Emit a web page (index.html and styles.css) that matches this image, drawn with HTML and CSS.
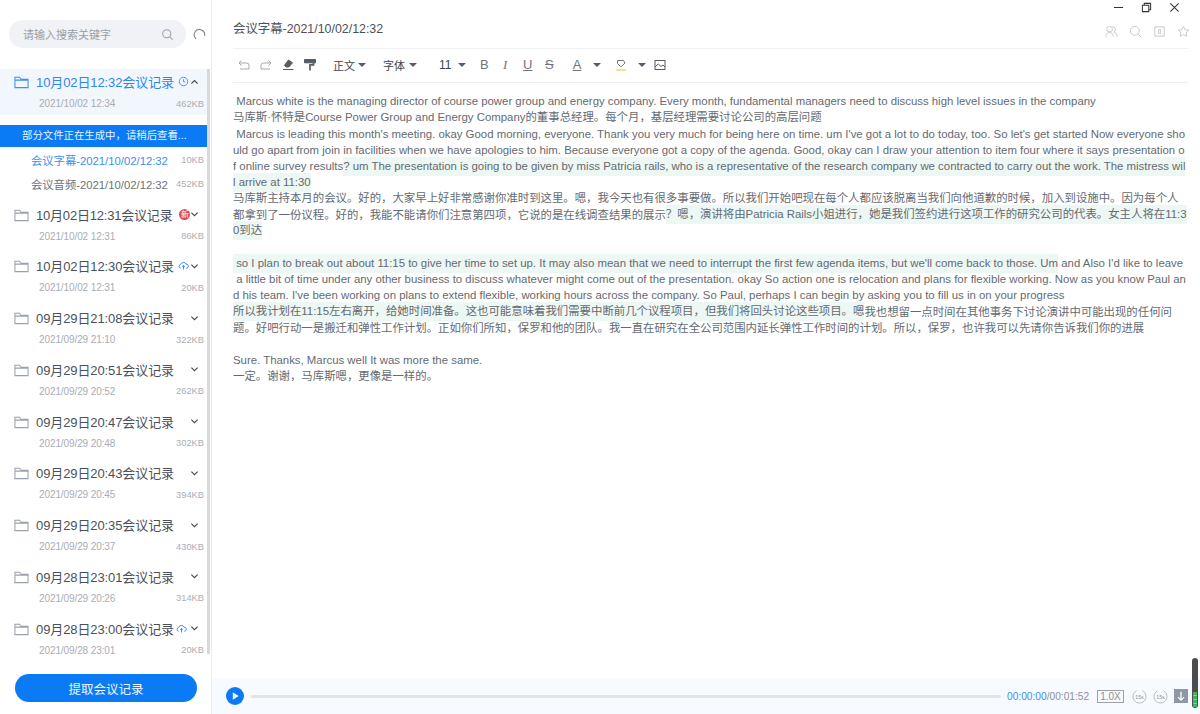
FILE: index.html
```html
<!DOCTYPE html>
<html lang="zh">
<head>
<meta charset="utf-8">
<title>会议记录</title>
<link rel="stylesheet" href="styles.css">
</head>
<body>
<div class="app">
  <aside class="side">
    <div class="search-row">
      <div class="search"><span class="ph">请输入搜索关键字</span>
        <svg class="s-ic" viewBox="0 0 14 14"><circle cx="6.2" cy="6.2" r="4.4"/><path d="M9.5 9.5L12.5 12.5"/></svg></div>
      <svg class="refresh" viewBox="0 0 14 14"><path d="M3.4 11.6A5.6 5.6 0 1 1 12.4 8.6"/></svg>
    </div>
    <div class="list">
      <div class="rec active">
        <div class="r1"><svg class="folder" viewBox="0 0 16 14"><path d="M1 2h5l1.5 2H15v9H1zM1 5h14"/></svg><span class="name">10月02日12:32会议记录</span>
          <svg class="st" viewBox="0 0 12 12"><circle cx="6" cy="6" r="4.6"/><path d="M6 3.5V6.3H8"/></svg>
          <svg class="chev" viewBox="0 0 10 6"><path d="M1.5 4.8L5 1.5L8.5 4.8"/></svg></div>
        <div class="r2"><span>2021/10/02 12:34</span><span>462KB</span></div>
      </div>
      <div class="notice">部分文件正在生成中，请稍后查看...</div>
      <div class="sub blue"><span>会议字幕-2021/10/02/12:32</span><span class="sz">10KB</span></div>
      <div class="sub"><span>会议音频-2021/10/02/12:32</span><span class="sz">452KB</span></div>
      <div class="rec first">
        <div class="r1"><svg class="folder" viewBox="0 0 16 14"><path d="M1 2h5l1.5 2H15v9H1zM1 5h14"/></svg><span class="name n2">10月02日12:31会议记录</span>
          <span class="new">新</span><svg class="chev" viewBox="0 0 10 6"><path d="M1.5 1.5L5 4.8L8.5 1.5"/></svg></div>
        <div class="r2"><span>2021/10/02 12:31</span><span>86KB</span></div>
      </div>
      <div class="rec">
        <div class="r1"><svg class="folder" viewBox="0 0 16 14"><path d="M1 2h5l1.5 2H15v9H1zM1 5h14"/></svg><span class="name">10月02日12:30会议记录</span>
          <svg class="cloud" viewBox="0 0 12 10"><path d="M3 8H2.6A2.1 2.1 0 0 1 2.8 3.9A3.3 3.3 0 0 1 9 3.6A2.2 2.2 0 0 1 9.4 8H9M6 9.5V5M4.5 6.4L6 5L7.5 6.4"/></svg>
          <svg class="chev" viewBox="0 0 10 6"><path d="M1.5 1.5L5 4.8L8.5 1.5"/></svg></div>
        <div class="r2"><span>2021/10/02 12:31</span><span>20KB</span></div>
      </div>
      <div class="rec">
        <div class="r1"><svg class="folder" viewBox="0 0 16 14"><path d="M1 2h5l1.5 2H15v9H1zM1 5h14"/></svg><span class="name">09月29日21:08会议记录</span>
          <svg class="chev" viewBox="0 0 10 6"><path d="M1.5 1.5L5 4.8L8.5 1.5"/></svg></div>
        <div class="r2"><span>2021/09/29 21:10</span><span>322KB</span></div>
      </div>
      <div class="rec">
        <div class="r1"><svg class="folder" viewBox="0 0 16 14"><path d="M1 2h5l1.5 2H15v9H1zM1 5h14"/></svg><span class="name">09月29日20:51会议记录</span>
          <svg class="chev" viewBox="0 0 10 6"><path d="M1.5 1.5L5 4.8L8.5 1.5"/></svg></div>
        <div class="r2"><span>2021/09/29 20:52</span><span>262KB</span></div>
      </div>
      <div class="rec">
        <div class="r1"><svg class="folder" viewBox="0 0 16 14"><path d="M1 2h5l1.5 2H15v9H1zM1 5h14"/></svg><span class="name">09月29日20:47会议记录</span>
          <svg class="chev" viewBox="0 0 10 6"><path d="M1.5 1.5L5 4.8L8.5 1.5"/></svg></div>
        <div class="r2"><span>2021/09/29 20:48</span><span>302KB</span></div>
      </div>
      <div class="rec">
        <div class="r1"><svg class="folder" viewBox="0 0 16 14"><path d="M1 2h5l1.5 2H15v9H1zM1 5h14"/></svg><span class="name">09月29日20:43会议记录</span>
          <svg class="chev" viewBox="0 0 10 6"><path d="M1.5 1.5L5 4.8L8.5 1.5"/></svg></div>
        <div class="r2"><span>2021/09/29 20:45</span><span>394KB</span></div>
      </div>
      <div class="rec">
        <div class="r1"><svg class="folder" viewBox="0 0 16 14"><path d="M1 2h5l1.5 2H15v9H1zM1 5h14"/></svg><span class="name">09月29日20:35会议记录</span>
          <svg class="chev" viewBox="0 0 10 6"><path d="M1.5 1.5L5 4.8L8.5 1.5"/></svg></div>
        <div class="r2"><span>2021/09/29 20:37</span><span>430KB</span></div>
      </div>
      <div class="rec">
        <div class="r1"><svg class="folder" viewBox="0 0 16 14"><path d="M1 2h5l1.5 2H15v9H1zM1 5h14"/></svg><span class="name">09月28日23:01会议记录</span>
          <svg class="chev" viewBox="0 0 10 6"><path d="M1.5 1.5L5 4.8L8.5 1.5"/></svg></div>
        <div class="r2"><span>2021/09/29 20:26</span><span>314KB</span></div>
      </div>
      <div class="rec">
        <div class="r1"><svg class="folder" viewBox="0 0 16 14"><path d="M1 2h5l1.5 2H15v9H1zM1 5h14"/></svg><span class="name tight">09月28日23:00会议记录</span>
          <svg class="cloud" viewBox="0 0 12 10"><path d="M3 8H2.6A2.1 2.1 0 0 1 2.8 3.9A3.3 3.3 0 0 1 9 3.6A2.2 2.2 0 0 1 9.4 8H9M6 9.5V5M4.5 6.4L6 5L7.5 6.4"/></svg>
          <svg class="chev" viewBox="0 0 10 6"><path d="M1.5 1.5L5 4.8L8.5 1.5"/></svg></div>
        <div class="r2"><span>2021/09/28 23:01</span><span>20KB</span></div>
      </div>
    </div>
    <div class="bottom"><button class="fetch">提取会议记录</button></div>
  </aside>
  <main class="main">
    <div class="winbar">
      <svg viewBox="0 0 12 12" class="w"><path d="M1 6H11"/></svg>
      <svg viewBox="0 0 12 12" class="w"><path d="M1.5 3.5H8.5V10.5H1.5zM3.5 3.5V1.5H10.5V8.5H8.5"/></svg>
      <svg viewBox="0 0 12 12" class="w"><path d="M1.5 1.5L10.5 10.5M10.5 1.5L1.5 10.5"/></svg>
    </div>
    <div class="head">
      <h1 class="title">会议字幕-2021/10/02/12:32</h1>
      <div class="tools">
        <svg viewBox="0 0 14 14"><circle cx="5" cy="4.5" r="3"/><path d="M1 12.5C1 9.5 3 8 5 8S9 9.5 9 12.5M8 1.8A3 3 0 0 1 9.5 7.5C11.5 8 13 9.7 13 12.5"/></svg>
        <svg viewBox="0 0 14 14"><circle cx="6.3" cy="6.3" r="4.8"/><path d="M9.8 9.8L12.8 12.8"/></svg>
        <svg viewBox="0 0 14 14"><rect x="2" y="2" width="10" height="10"/><path d="M6 5H8V9H6z"/></svg>
        <svg viewBox="0 0 14 14"><path stroke-linejoin="round" d="M7 1.5L8.7 5L12.7 5.5L9.8 8.2L10.5 12.3L7 10.3L3.5 12.3L4.2 8.2L1.3 5.5L5.3 5z"/></svg>
      </div>
    </div>
    <div class="toolbar">
      <svg class="ti lt" viewBox="0 0 12 12"><path d="M3.5 1.5L1 4L3.5 6.5M1 4H8.5A2.5 2.5 0 0 1 11 6.5V10H2"/></svg>
      <svg class="ti lt" viewBox="0 0 12 12"><path d="M8.5 1.5L11 4L8.5 6.5M11 4H3.5A2.5 2.5 0 0 0 1 6.5V10H10"/></svg>
      <svg class="ti" viewBox="0 0 12 12"><path class="fill" d="M6.5 1L10.5 3.8L6.8 8H4L2.5 6.3z"/><path d="M1 10.5H11.5"/></svg>
      <svg class="ti br" viewBox="0 0 12 12"><path class="fill" d="M.5 .5H11.5V3.8H.5z"/><path class="stem" d="M9.5 3.8V5.8H6V11.5"/></svg>
      <span class="tb t-a">正文<i class="car"></i></span>
      <span class="tb t-b">字体<i class="car"></i></span>
      <span class="tb t-c">11<i class="car"></i></span>
      <span class="fmt f-b">B</span>
      <span class="fmt f-i">I</span>
      <span class="fmt f-u">U</span>
      <span class="fmt f-s">S</span>
      <span class="fmt f-a">A</span><i class="car c-a"></i>
      <svg class="ti hl" viewBox="0 0 12 12"><path d="M2.5 1.5H8.5L10 4L6.5 7.5H5.5L2.5 4.5z"/><path class="yl" d="M1 11H11"/></svg><i class="car c-h"></i>
      <svg class="ti img" viewBox="0 0 12 12"><rect x="1" y="1.5" width="10" height="9"/><path d="M1 8L4.3 5L7 7.5L9 6L11 8"/></svg>
    </div>
    <div class="doc">
      <p class="ln"> Marcus white is the managing director of course power group and energy company. Every month, fundamental managers need to discuss high level issues in the company</p>
      <p class="ln">马库斯·怀特是Course Power Group and Energy Company的董事总经理。每个月，基层经理需要讨论公司的高层问题</p>
      <p class="ln"> Marcus is leading this month's meeting. okay Good morning, everyone. Thank you very much for being here on time. um I've got a lot to do today, too. So let's get started Now everyone sho</p>
      <p class="ln">uld go apart from join in facilities when we have apologies to him. Because everyone got a copy of the agenda. Good, okay can I draw your attention to item four where it says presentation o</p>
      <p class="ln">f online survey results<mark>? um The presentation is going to be given by miss Patricia rails, who is a representative of the research company we contracted to carry out the work. The mistress wil</mark></p>
      <p class="ln"><mark>l arrive at 11:30</mark></p>
      <p class="ln">马库斯主持本月的会议。好的，大家早上好非常感谢你准时到这里。嗯，我今天也有很多事要做。所以我们开始吧现在每个人都应该脱离当我们向他道歉的时候，加入到设施中。因为每个人</p>
      <p class="ln">都拿到了一份议程。好的，我能不能请你们注意第四项，它说的是在线调查结果的展示<mark>？嗯，演讲将由Patricia Rails小姐进行，她是我们签约进行这项工作的研究公司的代表。女主人将在11:3</mark></p>
      <p class="ln"><mark>0到达</mark></p>
      <p class="ln empty">&nbsp;</p>
      <p class="ln"><mark> so I plan to break out about 11:15 to give her time to set up. It may also mean that we need to interrupt the first few agenda items, but we'll come back to those. Um</mark> and Also I'd like to leave</p>
      <p class="ln"> a little bit of time under any other business to discuss whatever might come out of the presentation. okay So action one is relocation and plans for flexible working. Now as you know Paul an</p>
      <p class="ln">d his team. I've been working on plans to extend flexible, working hours across the company. So Paul, perhaps I can begin by asking you to fill us in on your progress</p>
      <p class="ln"><mark>所以我计划在11:15左右离开，给她时间准备。这也可能意味着我们需要中断前几个议程项目，但我们将回头讨论这些项目。嗯</mark>我也想留一点时间在其他事务下讨论演讲中可能出现的任何问</p>
      <p class="ln">题。好吧行动一是搬迁和弹性工作计划。正如你们所知，保罗和他的团队。我一直在研究在全公司范围内延长弹性工作时间的计划。所以，保罗，也许我可以先请你告诉我们你的进展</p>
      <p class="ln empty">&nbsp;</p>
      <p class="ln">Sure. Thanks, Marcus well It was more the same.</p>
      <p class="ln">一定。谢谢，马库斯嗯，更像是一样的。</p>
    </div>
    <div class="player">
      <svg class="play" viewBox="0 0 18 18"><circle cx="9" cy="9" r="9"/><path d="M6.8 5.2L12.6 9L6.8 12.8z"/></svg>
      <div class="track"></div>
      <span class="time"><b>00:00:00</b>/00:01:52</span>
      <span class="rate">1.0X</span>
      <svg class="skip" viewBox="0 0 16 16"><path d="M5 1.7A7 7 0 1 0 11 1.7"/><text x="8" y="10.2">15s</text></svg>
      <svg class="skip s2" viewBox="0 0 16 16"><path d="M11 1.7A7 7 0 1 1 5 1.7"/><text x="8" y="10.2">15s</text></svg>
      <span class="dl"><svg viewBox="0 0 10 10"><path d="M5 2V8M2.8 5.8L5 8L7.2 5.8"/></svg></span>
    </div>
    <div class="meter"><i></i></div>
  </main>
</div>
</body>
</html>
```
FILE: styles.css
```css
* { box-sizing: border-box; }
html, body { margin: 0; height: 100%; }
body { background: #fff; font-family: "Liberation Sans", "Noto Sans CJK SC", sans-serif; color: #555c66; overflow: hidden; }
.app { width: 1200px; height: 714px; display: flex; }
.side { width: 212px; flex: none; height: 714px; border-right: 1px solid #ebedf0; display: flex; flex-direction: column; }
.search-row { height: 69px; padding: 20px 0 0 9px; display: flex; align-items: flex-start; gap: 7px; flex: none; }
.search { width: 177px; height: 28px; background: #f1f2f5; border-radius: 14px; display: flex; align-items: center; justify-content: space-between; padding: 0 12px 0 14px; }
.ph { font-size: 11px; color: #9a9ea6; }
.s-ic { width: 13px; height: 13px; fill: none; stroke: #9a9ea6; stroke-width: 1.1; }
.refresh { width: 13px; height: 13px; margin-top: 8px; fill: none; stroke: #7f858e; stroke-width: 1.2; }
.list { flex: 1; border-right: 3px solid #d9d9dc; width: 210px; min-height: 0; }
.rec { height: 51.75px; padding: 0 3px 0 14px; }
.rec.active { height: 46px; background: #f2f6fd; margin-bottom: 10px; }
.rec.first { margin-top: 5.5px; }
.r1 { display: flex; align-items: center; height: 25px; margin-bottom: 2px; }
.folder { width: 15px; height: 14px; flex: none; fill: none; stroke: #9aa1ad; stroke-width: 1.1; margin-right: 7px; margin-top: 1px; }
.active .folder { stroke: #3d8ff0; }
.name { font-size: 13px; color: #4b515b; letter-spacing: -.1px; white-space: nowrap; }
.active .name { color: #2f86ee; }
.n2 { letter-spacing: -.2px; }
.st { width: 11px; height: 11px; margin-left: 4px; fill: none; stroke: #3d8ff0; stroke-width: 1; flex: none; }
.chev { width: 9px; height: 6px; margin-left: auto; margin-right: 5px; fill: none; stroke: #444a52; stroke-width: 1.3; flex: none; }
.new { width: 11px; height: 11px; border-radius: 50%; background: #df4b4f; color: #fff; font-size: 8px; line-height: 11px; text-align: center; margin-left: 7px; flex: none; }
.cloud { width: 11px; height: 9px; margin-left: 4px; fill: none; stroke: #3d8ff0; stroke-width: 1.1; flex: none; }
.tight + .cloud { margin-left: 2px; }
.r2 { display: flex; justify-content: space-between; font-size: 9.3px; color: #a9adb4; padding-left: 25px; height: 15px; align-items: center; }
.r2 span:first-child { font-size: 10px; letter-spacing: -.1px; }
.notice { width: 207px; height: 22px; background: #0b7bf5; color: #eaf3ff; font-size: 10.4px; line-height: 22px; padding-left: 22px; white-space: nowrap; }
.sub { display: flex; justify-content: space-between; align-items: center; height: 24px; padding: 0 3px 0 31px; font-size: 11.3px; color: #6d727a; white-space: nowrap; }
.sub.blue { margin-top: 1px; color: #3d8ff0; }
.sz { color: #a9adb4; font-size: 9.3px; }
.bottom { height: 60px; flex: none; padding: 20px 0 0 15px; width: 212px; }
.fetch { width: 182px; height: 28px; border: 0; border-radius: 14px; background: #0b7bf5; color: #eef6ff; font: 12.5px "Liberation Sans", "Noto Sans CJK SC", sans-serif; padding: 0; }
.main { flex: 1; min-width: 0; position: relative; display: flex; flex-direction: column; padding-left: 21px; }
.winbar { position: absolute; top: 2px; right: 20px; display: flex; gap: 17px; }
.w { width: 11px; height: 11px; fill: none; stroke: #333; stroke-width: 1.1; }
.head { height: 49px; margin-right: 12px; padding-top: 20px; border-bottom: 1px solid #f0f1f3; display: flex; justify-content: space-between; align-items: flex-start; flex: none; }
.title { margin: 0; font-weight: 400; font-size: 12.4px; line-height: 19px; color: #4b515b; }
.tools { display: flex; gap: 11px; padding: 5px 0 0; margin-right: -2px; }
.tools svg { width: 13px; height: 13px; fill: none; stroke: #c3c6cc; stroke-width: 1; }
.toolbar { height: 34px; margin-right: 12px; padding-bottom: 2px; border-bottom: 1px solid #eceef1; display: flex; align-items: center; padding-left: 5px; font-size: 11px; color: #555c66; flex: none; }
.ti { width: 12px; height: 12px; fill: none; stroke: #555c66; stroke-width: 1; flex: none; margin-right: 10px; }
.ti.lt { stroke: #a5a9b0; }
.ti .fill { fill: #555c66; }
.ti .stem { stroke-width: 1.7; }
.br { margin-right: 17px; }
.tb { display: inline-flex; align-items: center; color: #3f444c; flex: none; }
.t-a { width: 50px; }
.t-a .car { margin-left: 3px; }
.t-b { width: 56px; }
.t-c { width: 41px; font-size: 12px; }
.t-c .car { margin-left: 7px; }
.car { display: inline-block; width: 0; height: 0; border: 4px solid transparent; border-top: 4px solid #555c66; border-bottom-width: 0; margin-left: 4px; flex: none; }
.fmt { font-size: 13px; color: #70757d; flex: none; }
.f-b { width: 23px; }
.f-i { width: 20px; font-style: italic; font-family: "Liberation Serif", serif; }
.f-u { width: 22px; text-decoration: underline; }
.f-s { width: 26px; text-decoration: line-through; }
.f-a { width: 12px; text-align: center; text-decoration: underline; }
.c-a { margin-left: 10px; margin-right: 14px; }
.hl { margin-right: 0; stroke: #777; }
.hl .yl { stroke: #e5c62f; }
.c-h { margin-left: 11px; margin-right: 8px; }
.img { margin-right: 0; }
.doc { flex: 1; min-height: 0; padding-top: 10.3px; }
.ln { margin: 0; height: 16.18px; font-size: 11.4px; line-height: 16.18px; color: #646a72; white-space: pre; }
mark { background: #edf7f3; color: inherit; display: inline-block; height: 19px; line-height: 19px; vertical-align: top; margin-top: -1.4px; }
.player { height: 36px; margin-left: -21px; padding-left: 14px; background: #f7fafe; display: flex; align-items: center; flex: none; }
.play { width: 18px; height: 18px; flex: none; }
.play circle { fill: #0b7bf5; }
.play path { fill: #fff; }
.track { width: 750px; height: 3px; background: #e2e4e8; margin-left: 7px; border-radius: 2px; flex: none; }
.time { font-size: 10.2px; color: #8d929a; margin-left: 6px; width: 83px; flex: none; white-space: nowrap; }
.time b { font-weight: 400; color: #3d8ff0; }
.rate { width: 27px; height: 13px; border: 1px solid #9da2a9; font-size: 10px; line-height: 11px; text-align: center; color: #8d929a; margin-left: 7px; flex: none; }
.skip { width: 15px; height: 15px; fill: none; stroke: #a5a9b0; stroke-width: .8; margin-left: 8px; flex: none; }
.skip.s2 { margin-left: 6px; }
.skip text { font-size: 5.6px; text-anchor: middle; fill: #8d929a; stroke: none; font-family: "Liberation Sans", sans-serif; }
.dl { width: 14px; height: 14px; background: #8f97a5; margin-left: 6px; flex: none; display: flex; }
.dl svg { width: 14px; height: 14px; fill: none; stroke: #fff; stroke-width: .9; }
.meter { position: absolute; right: 2px; top: 658px; width: 6px; height: 50px; border-radius: 3px; background: #4a4c4e; overflow: hidden; }
.meter i { position: absolute; left: 1px; right: 1px; bottom: 1px; height: 15px; background: repeating-linear-gradient(#3fb15b 0 3px, #7fd08f 3px 4px); }
```
